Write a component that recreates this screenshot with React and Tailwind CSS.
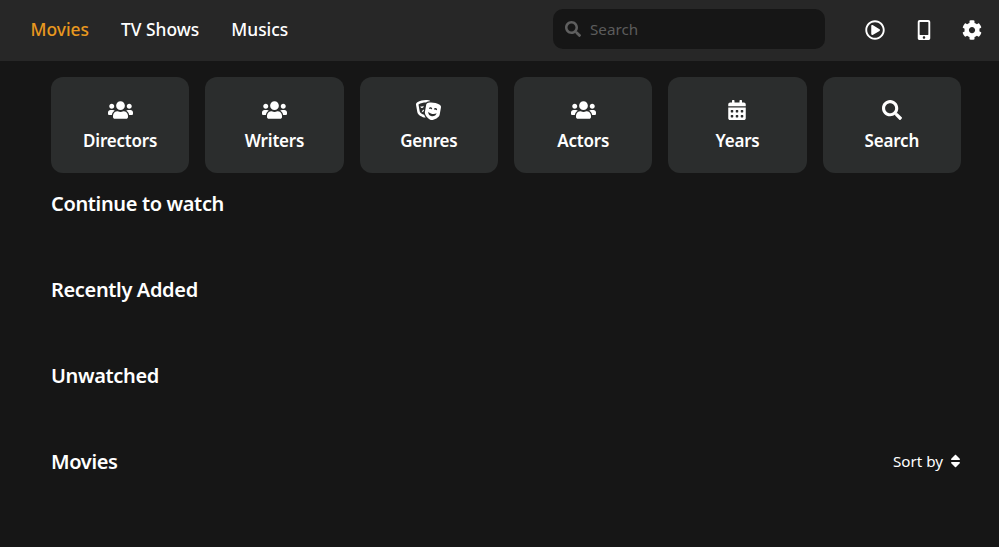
import React from "react";
import { FaUsers, FaTheaterMasks, FaCalendarAlt, FaSearch, FaRegPlayCircle, FaMobileAlt, FaCog, FaSort } from "react-icons/fa";

const cards = [
  ["Directors", FaUsers, 25, 20],
  ["Writers", FaUsers, 25, 20],
  ["Genres", FaTheaterMasks, 25, 20],
  ["Actors", FaUsers, 25, 20],
  ["Years", FaCalendarAlt, 20, 20],
  ["Search", FaSearch, 20, 20],
];

function Section({ title, right }) {
  return (
    <section className="h-[86px]">
      <div className="flex h-[30px] items-center justify-between">
        <h2 className="text-[20px] font-semibold tracking-[-0.35px] text-white">{title}</h2>
        {right}
      </div>
    </section>
  );
}

export default function App() {
  return (
    <div className="h-[547px] overflow-hidden bg-[#161616] text-white [font-family:'Noto_Sans','Open_Sans',sans-serif]">
      <header className="flex h-[61px] items-center bg-[#272727] pb-[2px] pl-[30.5px] pr-[17px]">
        <nav className="flex items-center gap-[32px] text-[17.4px] font-medium">
          <a className="text-[#e8981f]">Movies</a>
          <a>TV Shows</a>
          <a>Musics</a>
        </nav>
        <div className="ml-auto mt-[-1px] flex h-[40px] w-[272px] items-center gap-[9px] rounded-[10px] bg-[#161616] pl-[12px]">
          <FaSearch size={16} className="text-[#5f5f5f]" />
          <span className="mt-[1px] text-[15.2px] text-[#5c5c5c]">Search</span>
        </div>
        <div className="ml-[40px] flex items-center gap-[28.5px]">
          <FaRegPlayCircle size={20} />
          <FaMobileAlt size={20} />
          <FaCog size={20} />
        </div>
      </header>
      <main className="px-[51px] pt-[16px] pr-[38px]">
        <div className="grid grid-cols-6 gap-[16px]">
          {cards.map(([label, Icon, w, h], i) => (
            <div key={i} className="flex h-[96px] flex-col items-center rounded-[12px] bg-[#2b2d2d] pt-[23px]">
              <Icon size={h} style={{ width: w }} />
              <span className="mt-[9px] text-[17px] font-semibold leading-[24px] tracking-[-0.2px]">{label}</span>
            </div>
          ))}
        </div>
        <div className="pt-[16px]">
          <Section title="Continue to watch" />
          <Section title="Recently Added" />
          <Section title="Unwatched" />
          <Section
            title="Movies"
            right={
              <div className="flex items-center gap-[7px] pb-[2px] text-[15.2px]">
                <span>Sort by</span>
                <FaSort size={16} style={{ width: 11 }} />
              </div>
            }
          />
        </div>
      </main>
    </div>
  );
}
